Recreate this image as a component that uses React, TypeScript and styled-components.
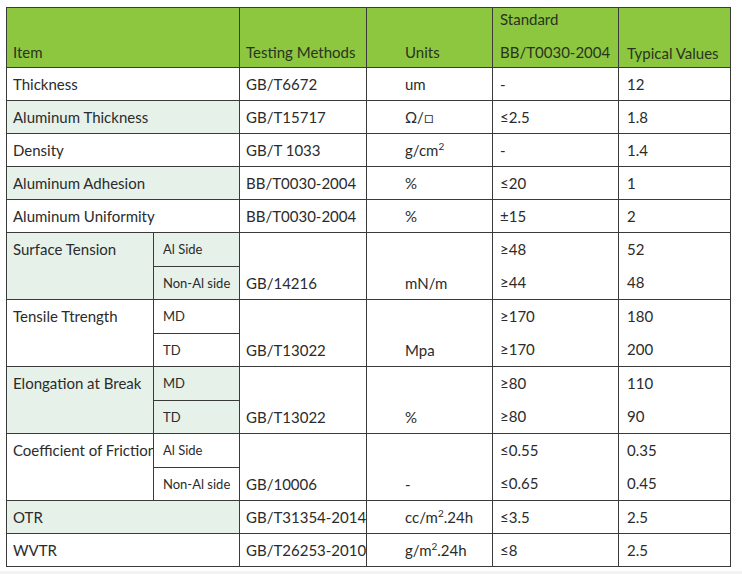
import React from 'react'
import styled, { createGlobalStyle } from 'styled-components'

const GlobalStyle = createGlobalStyle`
    body {
        margin: 0;
        background: #ffffff;
        font-family: 'Lato', 'Open Sans', sans-serif;
        color: #2b2b2b;
    }
`

type Row = {
    item: string
    shade?: boolean
    method: string
    units: React.ReactNode
    standard: string[]
    typical: string[]
    subs?: string[]
    subShade?: boolean
}

const sq = (unit: string, rest: string) => (
    <>
        {unit}
        <sup>2</sup>
        {rest}
    </>
)

const rows: Row[] = [
    { item: 'Thickness', method: 'GB/T6672', units: 'um', standard: ['-'], typical: ['12'] },
    { item: 'Aluminum Thickness', shade: true, method: 'GB/T15717', units: 'Ω/□', standard: ['≤2.5'], typical: ['1.8'] },
    { item: 'Density', method: 'GB/T 1033', units: sq('g/cm', ''), standard: ['-'], typical: ['1.4'] },
    { item: 'Aluminum Adhesion', shade: true, method: 'BB/T0030-2004', units: '%', standard: ['≤20'], typical: ['1'] },
    { item: 'Aluminum Uniformity', method: 'BB/T0030-2004', units: '%', standard: ['±15'], typical: ['2'] },
    {
        item: 'Surface Tension', shade: true, subs: ['Al Side', 'Non-Al side'], subShade: true,
        method: 'GB/14216', units: 'mN/m', standard: ['≥48', '≥44'], typical: ['52', '48'],
    },
    {
        item: 'Tensile Ttrength', subs: ['MD', 'TD'],
        method: 'GB/T13022', units: 'Mpa', standard: ['≥170', '≥170'], typical: ['180', '200'],
    },
    {
        item: 'Elongation at Break', shade: true, subs: ['MD', 'TD'], subShade: true,
        method: 'GB/T13022', units: '%', standard: ['≥80', '≥80'], typical: ['110', '90'],
    },
    {
        item: 'Coefficient of Friction', subs: ['Al Side', 'Non-Al side'],
        method: 'GB/10006', units: '-', standard: ['≤0.55', '≤0.65'], typical: ['0.35', '0.45'],
    },
    { item: 'OTR', shade: true, method: 'GB/T31354-2014', units: sq('cc/m', '.24h'), standard: ['≤3.5'], typical: ['2.5'] },
    { item: 'WVTR', method: 'GB/T26253-2010', units: sq('g/m', '.24h'), standard: ['≤8'], typical: ['2.5'] },
]

const App = () => {
    return (
        <Page>
            <GlobalStyle />
            <Table>
                <colgroup>
                    <col style={{ width: 147 }} />
                    <col style={{ width: 86 }} />
                    <col style={{ width: 127 }} />
                    <col style={{ width: 126 }} />
                    <col style={{ width: 126 }} />
                    <col style={{ width: 112 }} />
                </colgroup>
                <thead>
                    <tr>
                        <HeadCell colSpan={2}>Item</HeadCell>
                        <HeadCell>Testing Methods</HeadCell>
                        <HeadCell $indent={38}>Units</HeadCell>
                        <HeadCell $indent={7}>
                            <HeadTop>Standard</HeadTop>
                            BB/T0030-2004
                        </HeadCell>
                        <HeadCell $indent={8} $drop>Typical Values</HeadCell>
                    </tr>
                </thead>
                <tbody>
                    {rows.map((r) =>
                        r.subs ? (
                            <React.Fragment key={r.item}>
                                <tr>
                                    <Cell rowSpan={2} $shade={r.shade} $top $clip>{r.item}</Cell>
                                    <SubCell $shade={r.subShade}>{r.subs[0]}</SubCell>
                                    <Cell rowSpan={2} $bottom>{r.method}</Cell>
                                    <Cell rowSpan={2} $bottom $indent={38}>{r.units}</Cell>
                                    <Cell rowSpan={2} $indent={7}>
                                        <Lines>{r.standard.map((s, i) => <Line key={i}>{s}</Line>)}</Lines>
                                    </Cell>
                                    <Cell rowSpan={2} $indent={8}>
                                        <Lines>{r.typical.map((s, i) => <Line key={i}>{s}</Line>)}</Lines>
                                    </Cell>
                                </tr>
                                <tr>
                                    <SubCell $shade={r.subShade}>{r.subs[1]}</SubCell>
                                </tr>
                            </React.Fragment>
                        ) : (
                            <tr key={r.item}>
                                <Cell colSpan={2} $shade={r.shade}>{r.item}</Cell>
                                <Cell>{r.method}</Cell>
                                <Cell $indent={38}>{r.units}</Cell>
                                <Cell $indent={7}>{r.standard[0]}</Cell>
                                <Cell $indent={8}>{r.typical[0]}</Cell>
                            </tr>
                        )
                    )}
                </tbody>
            </Table>
            <Strip />
        </Page>
    )
}

export default App

const Page = styled.div`
    padding: 7px 0 0 6px;
    width: 742px;
    height: 574px;
    box-sizing: border-box;
    overflow: hidden;
`

const Table = styled.table`
    border-collapse: collapse;
    table-layout: fixed;
    width: 724px;
    font-size: 15px;
`

const HeadCell = styled.th<{ $indent?: number; $drop?: boolean }>`
    background: #8dc63f;
    color: #2a3320;
    font-weight: 400;
    text-align: left;
    vertical-align: bottom;
    height: 59px;
    line-height: ${(p) => (p.$drop ? 28 : 30)}px;
    padding: 0 4px 0 ${(p) => p.$indent ?? 6}px;
    border: 1px solid #3a3a3a;
    white-space: nowrap;
`

const HeadTop = styled.span`
    display: block;
    line-height: 36px;
    margin-top: -8px;
`

const Cell = styled.td<{
    $shade?: boolean
    $indent?: number
    $top?: boolean
    $bottom?: boolean
    $clip?: boolean
}>`
    background: ${(p) => (p.$shade ? '#e6f1ea' : '#ffffff')};
    border: 1px solid #3a3a3a;
    height: 32px;
    line-height: 32px;
    padding: 0 4px 0 ${(p) => p.$indent ?? 6}px;
    vertical-align: ${(p) => (p.$top ? 'top' : p.$bottom ? 'bottom' : 'middle')};
    white-space: nowrap;
    overflow: ${(p) => (p.$clip ? 'hidden' : 'visible')};

    sup {
        font-size: 10px;
        line-height: 0;
        vertical-align: 6px;
    }
`

const SubCell = styled.td<{ $shade?: boolean }>`
    background: ${(p) => (p.$shade ? '#e6f1ea' : '#ffffff')};
    border: 1px solid #3a3a3a;
    height: 32px;
    line-height: 32px;
    padding: 0 2px 0 9px;
    font-size: 13px;
    white-space: nowrap;
`

const Lines = styled.div`
    display: flex;
    flex-direction: column;
`

const Line = styled.span`
    height: 33px;
    line-height: 32px;
`

const Strip = styled.div`
    margin-top: 4px;
    margin-left: -6px;
    height: 10px;
    background: #f3f3f3;
`
